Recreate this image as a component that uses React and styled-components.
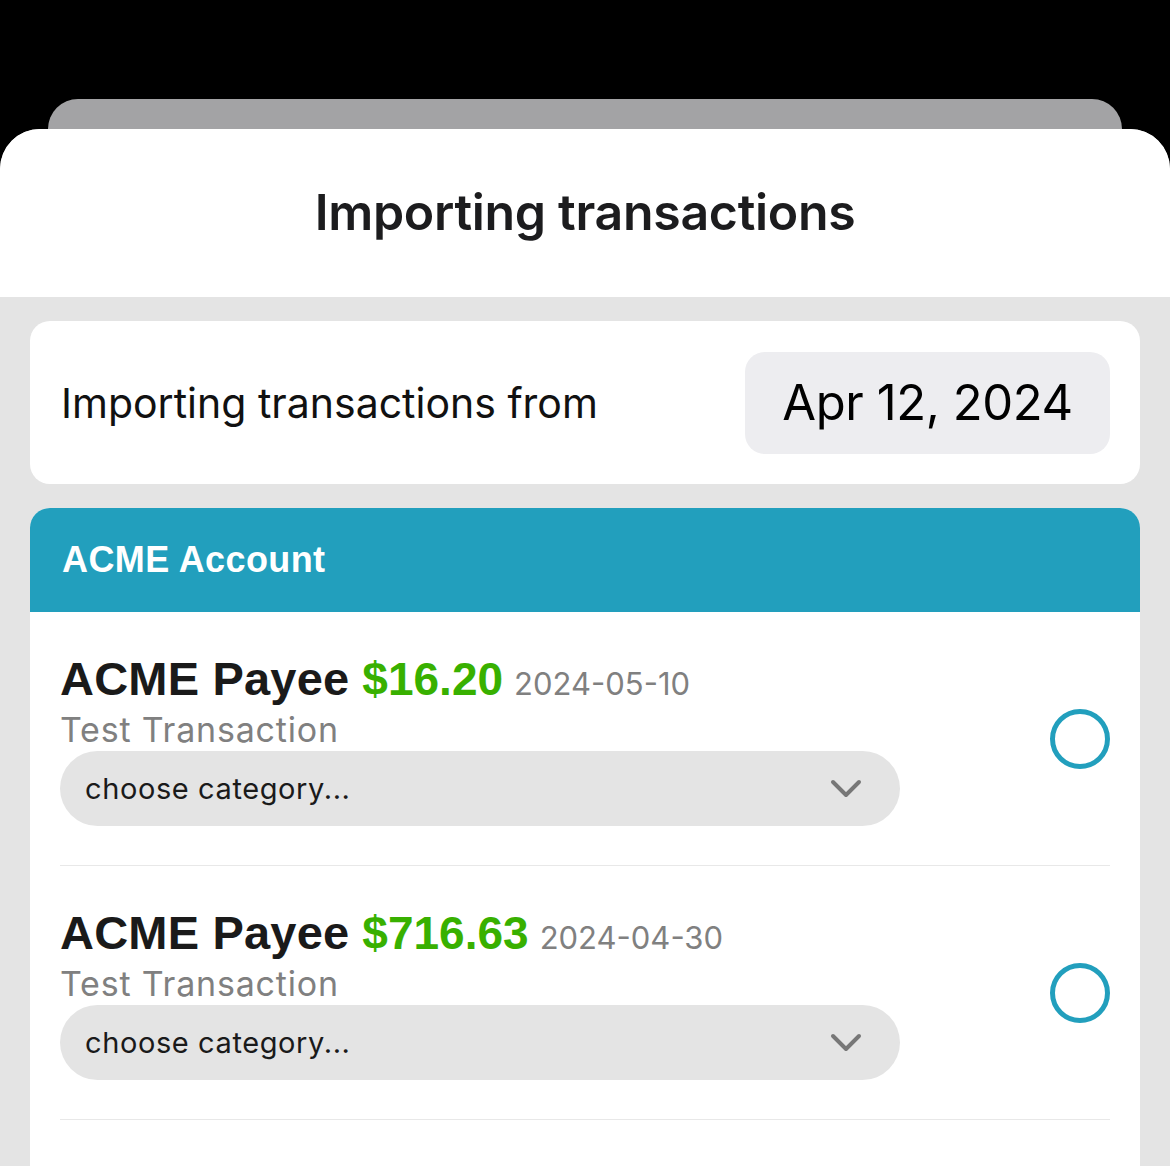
import React from 'react';
import styled, { createGlobalStyle } from 'styled-components';

const GlobalStyle = createGlobalStyle`
    html, body {
        margin: 0;
        padding: 0;
        background: #000;
    }
    * {
        box-sizing: border-box;
    }
`;

const Screen = styled.div`
    height: 1166px;
    width: 1170px;
    overflow: hidden;
    background: #000;
    padding-top: 99px;
    display: flex;
    flex-direction: column;
`;

const BackSheet = styled.div`
    height: 30px;
    margin: 0 48px;
    background: #a3a3a5;
    border-radius: 30px 30px 0 0;
    flex-shrink: 0;
`;

const Sheet = styled.div`
    flex: 1;
    display: flex;
    flex-direction: column;
    background: #e4e4e4;
    border-radius: 40px 40px 0 0;
    overflow: hidden;
`;

const SheetHeader = styled.div`
    height: 168px;
    flex-shrink: 0;
    background: #fff;
    display: flex;
    align-items: center;
    justify-content: center;
`;

const Title = styled.h1`
    margin: 0;
    padding-bottom: 2px;
    font-family: Inter, 'Noto Sans', sans-serif;
    font-weight: 600;
    font-size: 50px;
    letter-spacing: -0.3px;
    color: #1c1c1e;
`;

const Body = styled.div`
    flex: 1;
    display: flex;
    flex-direction: column;
    gap: 24px;
    padding: 24px 30px 0;
`;

const DateCard = styled.div`
    background: #fff;
    border-radius: 20px;
    height: 163px;
    padding: 0 30px 0 31px;
    display: flex;
    align-items: center;
    justify-content: space-between;
`;

const DateLabel = styled.span`
    font-family: Inter, 'Noto Sans', sans-serif;
    font-size: 41px;
    color: #111;
`;

const DatePill = styled.div`
    width: 365px;
    height: 102px;
    border-radius: 20px;
    background: #ededf0;
    display: flex;
    align-items: center;
    justify-content: center;
    font-family: Inter, 'Noto Sans', sans-serif;
    font-size: 49px;
    letter-spacing: -0.4px;
    color: #000;
`;

const AccountCard = styled.div`
    flex: 1;
    background: #fff;
    border-radius: 20px 20px 0 0;
    overflow: hidden;
`;

const AccountHeader = styled.div`
    height: 104px;
    background: #229fbd;
    display: flex;
    align-items: center;
    padding: 0 32px;
    font-family: 'Liberation Sans', Arial, sans-serif;
    font-weight: 700;
    font-size: 36px;
    letter-spacing: 0.4px;
    color: #fff;
`;

const Row = styled.div`
    margin: 0 30px;
    height: 254px;
    display: flex;
    align-items: center;
    justify-content: space-between;
    border-bottom: 1px solid #e8e8e8;
`;

const RowMain = styled.div`
    display: flex;
    flex-direction: column;
    margin-top: -3px;
`;

const TopLine = styled.div`
    display: flex;
    align-items: baseline;
    gap: 13px;
    line-height: 61px;
`;

const Payee = styled.span`
    font-family: 'Liberation Sans', Arial, sans-serif;
    font-weight: 700;
    font-size: 47px;
    color: #1a1a1a;
    letter-spacing: 0.2px;
`;

const Amount = styled.span`
    font-family: 'Liberation Sans', Arial, sans-serif;
    font-weight: 700;
    font-size: 46px;
    color: #38b000;
`;

const TxDate = styled.span`
    font-family: Inter, 'Noto Sans', sans-serif;
    font-size: 31px;
    color: #808080;
    margin-left: -2px;
`;

const Memo = styled.div`
    font-family: Inter, 'Noto Sans', sans-serif;
    font-size: 34px;
    letter-spacing: 0.8px;
    line-height: 43px;
    color: #808080;
    margin-top: -6px;
`;

const Select = styled.div`
    width: 840px;
    height: 75px;
    border-radius: 38px;
    background: #e4e4e4;
    display: flex;
    align-items: center;
    justify-content: space-between;
    padding: 0 38px 0 25px;
    font-family: Inter, 'Noto Sans', sans-serif;
    font-size: 29px;
    letter-spacing: 0.6px;
    color: #1a1a1a;
`;

const Radio = styled.div`
    width: 60px;
    height: 60px;
    border-radius: 50%;
    border: 5px solid #229fbd;
    flex-shrink: 0;
`;

const Chevron = () => (
    <svg width="32" height="20" viewBox="0 0 32 20">
        <path d="M3 3 L16 16 L29 3" fill="none" stroke="#777" strokeWidth="4" strokeLinecap="round" strokeLinejoin="round" />
    </svg>
);

const transactions = [
    { id: 1, payee: 'ACME Payee', amount: '$16.20', date: '2024-05-10', memo: 'Test Transaction' },
    { id: 2, payee: 'ACME Payee', amount: '$716.63', date: '2024-04-30', memo: 'Test Transaction' },
];

function TransactionRow({ tx }) {
    return (
        <Row>
            <RowMain>
                <TopLine>
                    <Payee>{tx.payee}</Payee>
                    <Amount>{tx.amount}</Amount>
                    <TxDate>{tx.date}</TxDate>
                </TopLine>
                <Memo>{tx.memo}</Memo>
                <Select>
                    <span>choose category...</span>
                    <Chevron />
                </Select>
            </RowMain>
            <Radio />
        </Row>
    );
}

export default function App() {
    return (
        <>
            <GlobalStyle />
            <Screen>
                <BackSheet />
                <Sheet>
                    <SheetHeader>
                        <Title>Importing transactions</Title>
                    </SheetHeader>
                    <Body>
                        <DateCard>
                            <DateLabel>Importing transactions from</DateLabel>
                            <DatePill>Apr 12, 2024</DatePill>
                        </DateCard>
                        <AccountCard>
                            <AccountHeader>ACME Account</AccountHeader>
                            {transactions.map((tx) => (
                                <TransactionRow key={tx.id} tx={tx} />
                            ))}
                        </AccountCard>
                    </Body>
                </Sheet>
            </Screen>
        </>
    );
}
